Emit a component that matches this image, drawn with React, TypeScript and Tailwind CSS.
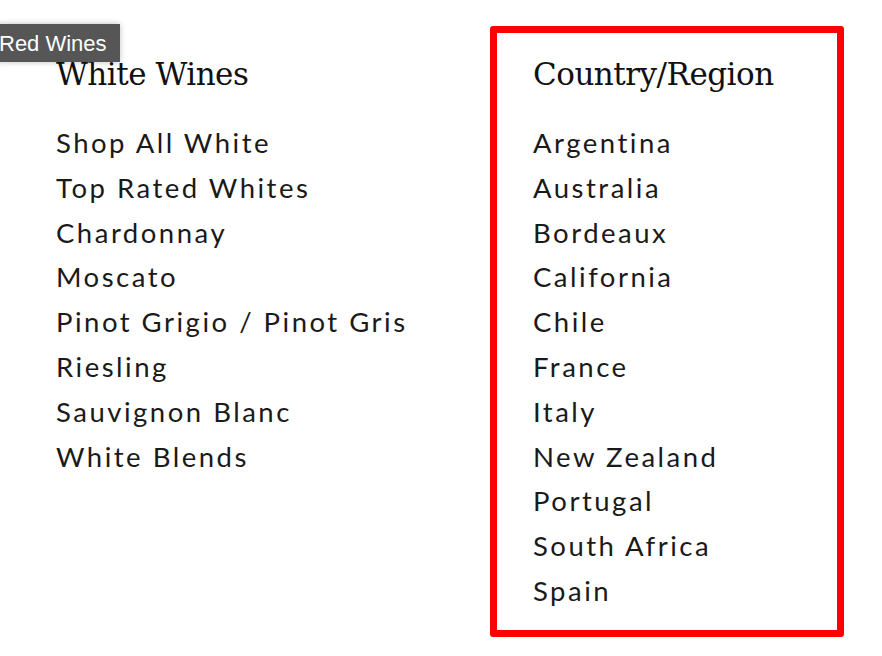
import React from 'react';

const whiteWines = [
  'Shop All White',
  'Top Rated Whites',
  'Chardonnay',
  'Moscato',
  'Pinot Grigio / Pinot Gris',
  'Riesling',
  'Sauvignon Blanc',
  'White Blends',
];

const regions = [
  'Argentina',
  'Australia',
  'Bordeaux',
  'California',
  'Chile',
  'France',
  'Italy',
  'New Zealand',
  'Portugal',
  'South Africa',
  'Spain',
];

const MenuColumn: React.FC<{ title: string; links: string[] }> = ({ title, links }) => (
  <div>
    <h3 className="font-['DejaVu_Serif',Georgia,serif] text-[31px] leading-[36px] text-[#111] tracking-[-0.5px]">
      {title}
    </h3>
    <ul className="mt-[29px]">
      {links.map(link => (
        <li
          key={link}
          className="font-['Lato',sans-serif] text-[27.5px] leading-[44.8px] tracking-[2.5px] text-[#1a1a1a]"
        >
          <a href="#">{link}</a>
        </li>
      ))}
    </ul>
  </div>
);

export default function App() {
  return (
    <div className="relative w-[882px] h-[656px] bg-white overflow-hidden">
      {/* hover tooltip */}
      <div className="absolute left-[-3px] top-[24px] h-[38px] w-[123px] bg-[#565656] shadow-[0_0_6px_rgba(0,0,0,0.25)] flex items-center pl-[2px] font-['Liberation_Sans',Arial,sans-serif] text-[22px] text-white">
        Red Wines
      </div>

      <div className="flex pt-[56px]">
        <div className="pl-[56px] w-[490px]">
          <MenuColumn title="White Wines" links={whiteWines} />
        </div>
        <div className="mt-[-30px] w-[354px] h-[611px] border-[7px] border-[#ff0000] rounded-[3px] pl-[36px] pt-[23px]">
          <MenuColumn title="Country/Region" links={regions} />
        </div>
      </div>
    </div>
  );
}
